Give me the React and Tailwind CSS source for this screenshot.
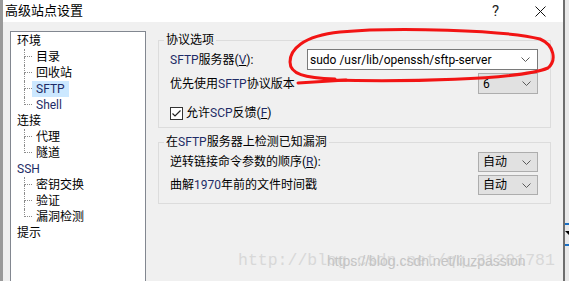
import React from 'react';

const Chevron = () => (
  <svg width="9" height="5" viewBox="0 0 9 5" className="shrink-0">
    <polyline points="0.5,0.5 4.5,4.5 8.5,0.5" fill="none" stroke="#5a5a5a" strokeWidth="1" />
  </svg>
);

const L = ({ children }) => <span className="text-[#1e2c66]">{children}</span>;

const TreeParent = ({ children }) => (
  <div className="h-[16px] pl-[6px] leading-[16px]">{children}</div>
);

const TreeChild = ({ children, last, selected }) => (
  <div className="flex h-[16px] items-stretch">
    <div className="w-[13px] shrink-0" />
    <div className="flex w-[8px] shrink-0 flex-col">
      <div className="h-[8px] border-b border-l border-dotted border-[#8c8c8c]" />
      <div className={last ? 'h-[8px]' : 'h-[8px] border-l border-dotted border-[#8c8c8c]'} />
    </div>
    <span className={selected ? 'bg-[#cce8ff] px-[4px] leading-[16px]' : 'px-[4px] leading-[16px]'}>{children}</span>
  </div>
);

const SmallCombo = ({ value, h }) => (
  <div className={`flex w-[60px] shrink-0 items-center justify-between border border-[#adadad] bg-[#e1e1e1] pl-[4px] pr-[6px] ${h}`}>
    <span className="leading-[16px]">{value}</span>
    <Chevron />
  </div>
);

const App = () => {
  return (
    <div className="relative flex h-[281px] w-[569px] overflow-hidden bg-[#f0f0f0] font-['Roboto','Noto_Sans_CJK_SC',sans-serif] text-[12px] text-black">
      {/* background window sliver */}
      <div className="w-[3px] shrink-0 bg-[#9a9a9a]" />

      {/* dialog */}
      <div className="flex w-[560px] shrink-0 flex-col">
        <div className="flex h-[22px] shrink-0 items-center bg-white pl-[2px]">
          <span className="text-[13px] leading-[16px]">高级站点设置</span>
          <span className="ml-auto text-[15px] leading-[16px] text-[#222]">?</span>
          <svg width="11" height="11" viewBox="0 0 11 11" className="ml-[36px] mr-[17px]">
            <line x1="0.5" y1="0.5" x2="10.5" y2="10.5" stroke="#111" strokeWidth="1" />
            <line x1="10.5" y1="0.5" x2="0.5" y2="10.5" stroke="#111" strokeWidth="1" />
          </svg>
        </div>

        <div className="flex flex-1 items-start">
          {/* tree */}
          <div className="ml-[7px] mt-[9px] h-[260px] w-[136px] shrink-0 border border-b-0 border-[#828790] bg-white pt-[1px]">
            <TreeParent>环境</TreeParent>
            <TreeChild>目录</TreeChild>
            <TreeChild>回收站</TreeChild>
            <TreeChild selected><L>SFTP</L></TreeChild>
            <TreeChild last><L>Shell</L></TreeChild>
            <TreeParent>连接</TreeParent>
            <TreeChild>代理</TreeChild>
            <TreeChild last>隧道</TreeChild>
            <TreeParent><L>SSH</L></TreeParent>
            <TreeChild>密钥交换</TreeChild>
            <TreeChild>验证</TreeChild>
            <TreeChild last>漏洞检测</TreeChild>
            <TreeParent>提示</TreeParent>
          </div>

          {/* options */}
          <div className="ml-[12px] mt-[10px] flex w-[393px] shrink-0 flex-col">
            <fieldset className="border border-[#dcdcdc] pb-[6px]">
              <legend className="ml-[5px] px-[2px] leading-[16px]">协议选项</legend>
              <div className="pl-[11px] pr-[12px]">
                <div className="mt-[1px] flex items-center justify-between">
                  <span className="leading-[16px]"><L>SFTP</L>服务器(<span className="underline"><L>V</L></span>):</span>
                  <div className="flex h-[21px] w-[231px] shrink-0 items-center justify-between border border-[#7a7a7a] bg-white pl-[2px] pr-[7px]">
                    <span className="leading-[16px]">sudo /usr/lib/openssh/sftp-server</span>
                    <Chevron />
                  </div>
                </div>
                <div className="mt-[3px] flex items-center justify-between">
                  <span className="leading-[16px]">优先使用<L>SFTP</L>协议版本</span>
                  <SmallCombo value="6" h="h-[21px]" />
                </div>
                <div className="mt-[11px] flex h-[16px] items-center">
                  <svg width="13" height="13" viewBox="0 0 13 13" className="shrink-0">
                    <rect x="0.5" y="0.5" width="12" height="12" fill="#fff" stroke="#333" />
                    <polyline points="2.5,6.5 5,9 10.5,3.5" fill="none" stroke="#222" strokeWidth="1.2" />
                  </svg>
                  <span className="ml-[3px] leading-[16px]">允许<L>SCP</L>反馈(<span className="underline"><L>F</L></span>)</span>
                </div>
              </div>
            </fieldset>

            <fieldset className="mt-[6px] border border-[#dcdcdc] pb-[8px]">
              <legend className="ml-[5px] px-[2px] leading-[16px]">在<L>SFTP</L>服务器上检测已知漏洞</legend>
              <div className="pl-[11px] pr-[12px]">
                <div className="mt-[2px] flex items-center justify-between">
                  <span className="leading-[16px]">逆转链接命令参数的顺序(<span className="underline"><L>R</L></span>):</span>
                  <SmallCombo value="自动" h="h-[20px]" />
                </div>
                <div className="mt-[3px] flex items-center justify-between">
                  <span className="leading-[16px]">曲解<L>1970</L>年前的文件时间戳</span>
                  <SmallCombo value="自动" h="h-[20px]" />
                </div>
              </div>
            </fieldset>
          </div>
        </div>
      </div>

      {/* window behind, right edge */}
      <div className="relative flex-1 border-l-2 border-[#6e6e6e] bg-[#e9e9e9]">
        <div className="absolute left-0 top-[223px] h-[2px] w-full bg-[#1a6fc4]" />
        <div className="absolute left-0 top-[231px] h-0 w-0 border-l-[4px] border-t-[4px] border-l-transparent border-t-black" />
        <div className="absolute left-0 top-[244px] h-[2px] w-full bg-[#1a6fc4]" />
      </div>

      {/* red annotation */}
      <svg className="pointer-events-none absolute left-0 top-0" width="569" height="281" viewBox="0 0 569 281">
        <path
          d="M 330 80 C 400 82, 520 80, 548 68 C 557 60, 554 45, 540 39 C 505 30, 395 27, 340 32 C 302 36, 290 50, 290 62 C 290 74, 304 78, 335 79"
          fill="none" stroke="#f21414" strokeWidth="3" strokeLinecap="round"
        />
        <path d="M 298 83 L 346 80" fill="none" stroke="#f21414" strokeWidth="3" strokeLinecap="round" />
      </svg>

      {/* watermark */}
      <div className="pointer-events-none absolute left-[238px] top-[250px] font-['Liberation_Mono',monospace] text-[16.5px] leading-[22px] text-[#d8d8d8]">
        http://blog.csdn.net/qq_31201781
      </div>
      <div className="pointer-events-none absolute left-[327px] top-[252px] font-['Liberation_Sans',sans-serif] text-[14px] leading-[18px] text-[#c4c4c4]">
        https://blog.csdn.net/liuzpassion
      </div>
    </div>
  );
};

export default App;
